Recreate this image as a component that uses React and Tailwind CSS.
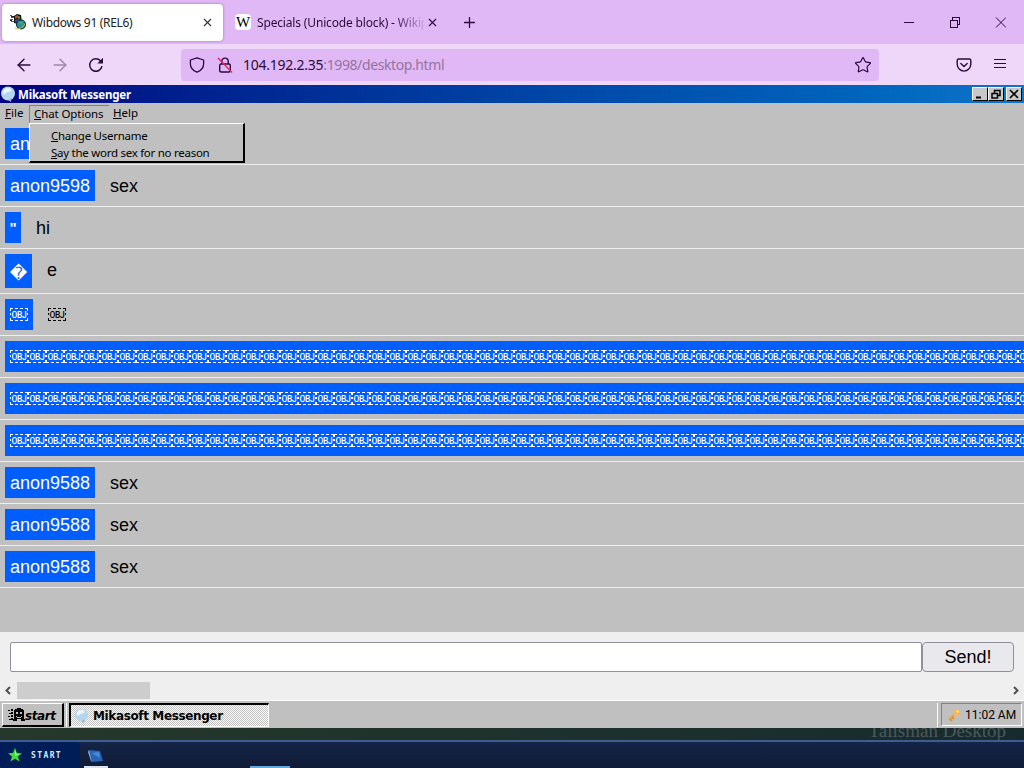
import { ArrowLeft, ArrowRight, Star, X, Plus } from 'lucide-react';

const messages = [
  { user: 'anon9598', text: 'sex' },
  { user: 'anon9598', text: 'sex' },
  { user: '"', text: 'hi', small: true },
  { user: '\uFFFD', text: 'e', symbol: true },
  { objects: 1 },
  { objects: 57 },
  { objects: 57 },
  { objects: 57 },
  { user: 'anon9588', text: 'sex' },
  { user: 'anon9588', text: 'sex' },
  { user: 'anon9588', text: 'sex' },
];

// Object replacement character: a dashed frame with the letters OBJ
function Obj() {
  return (
    <svg viewBox="0 0 18 13" className="h-[13px] w-[18px] shrink-0">
      <path
        d="M0 .5h18M0 12.500h18M.5 1v2M.5 5v2M.5 10v2"
        fill="none"
        stroke="currentColor"
        strokeDasharray="3 2"
        shapeRendering="crispEdges"
      />
      <path d="M17.500 1v2M17.500 5v2M17.500 10v2" stroke="currentColor" shapeRendering="crispEdges" />
      <text x="9" y="9.500" textAnchor="middle" fill="currentColor" className="font-['Roboto',sans-serif] text-[8.5px] font-medium tracking-[-0.3px]">OBJ</text>
    </svg>
  );
}

function Message({ msg }) {
  if (msg.objects) {
    return (
      <li className="flex h-[42px] shrink-0 items-center gap-[15px] border-b border-[#efefef] pl-[5px]">
        <span className="flex h-[31px] shrink-0 items-center bg-[#005eff] px-[5px] text-white">
          {Array.from({ length: msg.objects }, (_, i) => <Obj key={i} />)}
        </span>
        {msg.objects === 1 && <Obj />}
      </li>
    );
  }
  return (
    <li className={`flex shrink-0 items-center gap-[15px] border-b border-[#efefef] pl-[5px] ${msg.symbol ? 'h-[45px]' : 'h-[42px]'}`}>
      <span
        className={`flex items-center justify-center bg-[#005eff] text-white ${
          msg.symbol
            ? "h-[34px] w-[27px] pt-1 font-['DejaVu_Sans',sans-serif] text-[17px]"
            : msg.small
              ? 'h-[31px] w-[16px] text-[15px] font-bold'
              : 'h-[31px] px-[5px]'
        }`}
      >
        {msg.user}
      </span>
      <span className={msg.symbol ? '-mt-[3px]' : ''}>{msg.text}</span>
    </li>
  );
}

function Globe({ className }) {
  return (
    <svg viewBox="0 0 16 16" className={className}>
      <circle cx="8" cy="7.5" r="7" fill="#b5d6ee" />
      <path d="M8 14l3 2 .5-4z" fill="#8cb5d8" />
      <path d="M3 5c1-3 5-4 8-2 1 2-1 3-3 3S5 9 3 8z" fill="#eaf5fc" />
    </svg>
  );
}

function Favicon() {
  return (
    <svg viewBox="0 0 16 16" className="h-4 w-4">
      <path d="M0 1h2v1H0zM1 3h3v1H1zM0 5h3v1H0zM1 7h3v1H1z" fill="#d4233c" />
      <path d="M1 2h3v1H1zM0 6h2v1H0z" fill="#222" />
      <path d="M4 2l3-2 4 1 1 8-4 1-4-1z" fill="#111" />
      <path d="M5 2l3-1v3l-3 1z" fill="#d33" />
      <path d="M8 2l2 .5V5L8 4.500z" fill="#3a3" />
      <path d="M5 6l3-1v3l-3 .5z" fill="#24c" />
      <path d="M8 5.500l2 .5v2L8 7.500z" fill="#dc2" />
      <circle cx="11" cy="10.500" r="5" fill="#0b2b3c" />
      <circle cx="11" cy="10.500" r="4" fill="#268ca8" />
      <path d="M9 8l3-.5 1 2-3 1zM12 11h2l-1.500 2.500z" fill="#45b05a" />
      <path d="M5 14c4 2 7 0 10-4" fill="none" stroke="#c9b94a" />
    </svg>
  );
}

function Browser() {
  return (
    <header className="shrink-0 font-['Noto_Sans',sans-serif] text-[#2b0b3c]">
      <div className="flex h-11 items-center bg-[#e1b8f6] text-xs">
        <div className="ml-[2px] flex h-[37px] w-[221px] items-center rounded bg-white pl-2 pr-[9px] shadow-[0_0_3px_#9a78ac]">
          <Favicon />
          <span className="ml-[6px] mt-[2px] grow tracking-[-0.31px] text-[#222]">Wibdows 91 (REL6)</span>
          <X size={13} strokeWidth={2} className="text-[#333]" />
        </div>
        <div className="ml-3 flex w-[204px] items-center">
          <span className="flex h-4 w-4 shrink-0 items-center justify-center rounded-sm bg-white font-['Liberation_Serif',serif] text-[15px] leading-none text-black">W</span>
          <span className="ml-[6px] mt-[2px] w-[167px] overflow-hidden whitespace-nowrap tracking-[-0.16px] [mask-image:linear-gradient(to_right,#000_82%,transparent_102%)]">
            Specials (Unicode block) - Wikipedia
          </span>
          <X size={13} strokeWidth={2} className="ml-[2px] shrink-0" />
        </div>
        <Plus size={17} strokeWidth={1.8} className="ml-[22px]" />
        <svg className="ml-auto mr-[18px] h-[11px] w-[102px]" viewBox="0 0 102 11" fill="none" stroke="currentColor" shapeRendering="crispEdges">
          <path d="M0 5.5h10M46.500 3.500h7v7h-7zM48.500 3.500v-3h7v7h-2" />
          <path d="M92 0.500l10 10M102 0.500l-10 10" shapeRendering="auto" />
        </svg>
      </div>
      <div className="flex h-[41px] items-center bg-[#efd7fa]">
        <ArrowLeft size={20} strokeWidth={1.7} className="ml-[14px]" />
        <ArrowRight size={20} strokeWidth={1.7} className="ml-4 opacity-40" />
        <svg viewBox="0 0 16 16" className="ml-[18px] h-4 w-4" fill="none" stroke="currentColor" strokeWidth="1.500">
          <path d="M14 9.200A6.200 6.200 0 1 1 12.600 4" />
          <path d="M15 0.800v5.700H9.300z" fill="currentColor" stroke="none" />
        </svg>
        <div className="ml-[77px] flex h-8 w-[698px] items-center rounded bg-[#e1b8f6] pl-2 pr-[7px]">
          <svg viewBox="0 0 16 16" className="h-4 w-4" fill="none" stroke="currentColor" strokeWidth="1.300">
            <path d="M8 .8L14.600 3v4c0 4-3 6.800-6.600 8.200C4.400 13.800 1.400 11 1.400 7V3z" strokeLinejoin="round" />
          </svg>
          <svg viewBox="0 0 16 16" className="ml-3 h-4 w-4" fill="none" stroke="currentColor" strokeWidth="1.400">
            <rect x="2.700" y="7" width="10.600" height="8" rx="1.500" />
            <path d="M4.800 7V4.300a3.200 3.200 0 0 1 6.400 0V7" />
            <path d="M1 1l14 14.500" stroke="#e0265d" />
          </svg>
          <span className="ml-[10px] text-sm tracking-[-0.25px]">
            104.192.2.35<span className="tracking-[-0.4px] text-[#94739f]">:1998/desktop.html</span>
          </span>
          <Star size={18} strokeWidth={1.6} className="ml-auto" />
        </div>
        <svg viewBox="0 0 16 16" className="ml-[77px] h-4 w-4" fill="none" stroke="currentColor" strokeWidth="1.400" strokeLinecap="round" strokeLinejoin="round">
          <path d="M2.500 2h11a1.300 1.300 0 0 1 1.300 1.300v4a6.800 6.800 0 0 1-13.600 0v-4A1.300 1.300 0 0 1 2.500 2zM4.800 6.500L8 9.500l3.200-3" />
        </svg>
        <svg viewBox="0 0 12 11" className="-mt-[2px] ml-[22px] h-[11px] w-3" stroke="currentColor" shapeRendering="crispEdges">
          <path d="M0 1.500h12M0 5.500h12M0 9.500h12" />
        </svg>
      </div>
    </header>
  );
}

function WinButton({ children }) {
  return (
    <span className="flex h-[14px] w-4 items-center justify-center border border-b-black border-l-white border-r-black border-t-white bg-[#c8c8c8]">
      <svg viewBox="0 0 10 10" className="h-[10px] w-[10px]" fill="none" stroke="#000" strokeWidth="1.500">
        {children}
      </svg>
    </span>
  );
}

function TitleBar() {
  return (
    <div className="flex h-[18px] shrink-0 items-center bg-linear-to-r from-[#000080] to-[#1074c8] pr-[2px]">
      <Globe className="h-4 w-4" />
      <span className="ml-[2px] mt-[2px] grow font-['Noto_Sans',sans-serif] text-[11.5px] font-bold tracking-[-0.2px] text-white">Mikasoft Messenger</span>
      <WinButton><path d="M1 8.500h5" strokeWidth="2" /></WinButton>
      <WinButton><path d="M1 4.500h5.500v4.500H1zM3.500 4V1.500H9V6.500H7" /></WinButton>
      <span className="w-[2px]" />
      <WinButton><path d="M1 1l8 8M9 1L1 9" strokeWidth="1.700" /></WinButton>
    </div>
  );
}

function MenuBar() {
  return (
    <nav className="relative flex h-5 shrink-0 items-start font-['Noto_Sans',sans-serif] text-[11.5px] text-black">
      <span className="ml-[5px] w-6 leading-5"><u>F</u>ile</span>
      <span className="mt-[2px] h-[18px] w-20 border-l border-t border-[#808080] pl-1 leading-4 tracking-[-0.1px]"><u>C</u>hat Options</span>
      <span className="ml-1 leading-5"><u>H</u>elp</span>
      <div className="absolute left-[29px] top-[20px] z-10 h-10 w-[216px] border-b-2 border-l border-r-2 border-t border-b-black border-l-white border-r-black border-t-white bg-[#c0c0c0] pl-[21px] pt-[3px] leading-[17px] tracking-[-0.27px]">
        <div><u>C</u>hange Username</div>
        <div><u>S</u>ay the word sex for no reason</div>
      </div>
    </nav>
  );
}

function Taskbar() {
  return (
    <div className="flex h-7 shrink-0 items-center border-t border-white bg-[#c0c0c0]">
      <button className="ml-[2px] flex h-6 w-[62px] items-center border-b-2 border-l border-r-2 border-t border-b-black border-l-white border-r-black border-t-white pl-[5px] font-['DejaVu_Sans',sans-serif] text-xs font-bold italic text-black">
        <svg viewBox="0 0 17 14" className="mt-[2px] h-[14px] w-[17px] shrink-0" shapeRendering="crispEdges">
          <path d="M0 2h2v1H0zM3 1h2v2H3zM1 5h2v1H1zM3 4h2v2H3zM0 8h2v1H0zM3 7h2v2H3zM1 11h2v1H1zM3 10h2v2H3z" />
          <path d="M6 2h1V1h2V0h4v1h2v1h1v9h1v2h-4v-2H9v2H5v-2h1z" />
          <path d="M8 4h2v2H8zM12 4h2v2h-2zM8 8h1v1h4V8h1v1h-1v1H9V9H8z" fill="#c0c0c0" />
        </svg>
        <span className="mt-[3px] tracking-[-0.4px]">start</span>
      </button>
      <span className="ml-[2px] h-6 w-px bg-white" />
      <div className="ml-[2px] flex h-6 w-[200px] items-center border-b border-l-2 border-r border-t-2 border-b-white border-l-black border-r-white border-t-black bg-[repeating-conic-gradient(#fff_0_25%,#c0c0c0_0_50%)] bg-[size:2px_2px] pl-[3px]">
        <Globe className="h-[15px] w-[15px]" />
        <span className="ml-1 mt-[2px] font-['DejaVu_Sans',sans-serif] text-xs font-bold tracking-[-0.37px] text-black">Mikasoft Messenger</span>
      </div>
      <span className="ml-auto h-6 w-px bg-white" />
      <div className="ml-[3px] mr-[2px] flex h-[23px] w-[81px] items-center border border-b-white border-l-[#808080] border-r-white border-t-[#808080] pl-[5px] font-['Roboto',sans-serif] text-xs text-black">
        <svg viewBox="0 0 14 14" className="h-[14px] w-[14px]">
          <path d="M2 12l6-6" stroke="#f3a43b" strokeWidth="2.500" />
          <path d="M3 11l2 2M5 9l2 2" stroke="#d88828" strokeWidth="1.500" />
          <circle cx="9.500" cy="4.500" r="3.500" fill="#f8b756" />
          <circle cx="10.500" cy="3.500" r="1" fill="#fff" />
        </svg>
        <span className="ml-1 whitespace-nowrap">11:02 AM</span>
      </div>
    </div>
  );
}

function HostDesktop() {
  return (
    <>
      <div className="flex h-3 shrink-0 justify-end overflow-hidden bg-linear-to-r from-[#263829] to-[#172b2e] pr-[18px]">
        <span className="-mt-2 font-['Liberation_Serif',serif] text-[19px] leading-[22px] text-[#4c585c]">Talisman Desktop</span>
      </div>
      <footer className="flex h-7 shrink-0 items-center border-t-2 border-[#3f5c91] bg-linear-to-b from-[#142448] to-[#101b36]">
        <div className="flex h-full w-20 items-center rounded-r bg-[#001d58] pl-2">
          <svg viewBox="0 0 14 14" className="h-[14px] w-[14px]">
            <path d="M7 0l2 5 5 .3-4 3.200 1.500 5L7 10.700 2.500 13.500 4 8.500 0 5.300 5 5z" fill="#3ee03b" />
            <path d="M7 2l1 4 3 .5-4 1z" fill="#c1ffae" />
          </svg>
          <span className="ml-[9px] mt-[2px] font-['DejaVu_Sans_Mono',monospace] text-[8px] font-bold tracking-[1.4px] text-[#dce8f8]">START</span>
        </div>
        <div className="flex h-full w-8 flex-col items-center justify-end">
          <svg viewBox="0 0 16 14" className="mb-[3px] h-[14px] w-4">
            <path d="M1 1l11 1 3 10-11 1z" fill="#2864b7" />
            <path d="M1 1l3 12-1-1L0 3z" fill="#8bb5e4" />
            <path d="M4 4l7-1 1 6z" fill="#4d8ad6" />
          </svg>
          <span className="h-[2px] w-6 bg-[#d9e5ef]" />
        </div>
        <span className="ml-[138px] h-[2px] w-10 self-end bg-[#63a8dc]" />
      </footer>
    </>
  );
}

export default function App() {
  return (
    <div className="flex h-screen w-screen flex-col overflow-hidden bg-[#c0c0c0] font-['Liberation_Sans',sans-serif] text-lg leading-none text-black">
      <Browser />
      <TitleBar />
      <MenuBar />
      <ul className="flex min-h-0 grow flex-col overflow-hidden">
        {messages.map((msg, i) => <Message key={i} msg={msg} />)}
      </ul>
      <form className="flex h-[50px] shrink-0 items-center bg-[#efefef] px-[10px]">
        <input type="text" className="h-[30px] min-w-0 grow rounded-xs border border-[#8f8f9d] bg-white" />
        <button type="button" className="h-[30px] w-[92px] rounded border border-[#8f8f9d] bg-[#e9e9ed]">Send!</button>
      </form>
      <div className="flex h-[18px] shrink-0 items-start bg-[#efefef]">
        <svg viewBox="0 0 17 17" className="h-[17px] w-[17px]" fill="none" stroke="#505050" strokeWidth="2">
          <path d="M10 5L6.500 8.500 10 12" />
        </svg>
        <span className="h-[17px] w-[133px] bg-[#cdcdcd]" />
        <svg viewBox="0 0 17 17" className="ml-auto h-[17px] w-[17px]" fill="none" stroke="#505050" strokeWidth="2">
          <path d="M7 5l3.500 3.500L7 12" />
        </svg>
      </div>
      <Taskbar />
      <HostDesktop />
    </div>
  );
}
